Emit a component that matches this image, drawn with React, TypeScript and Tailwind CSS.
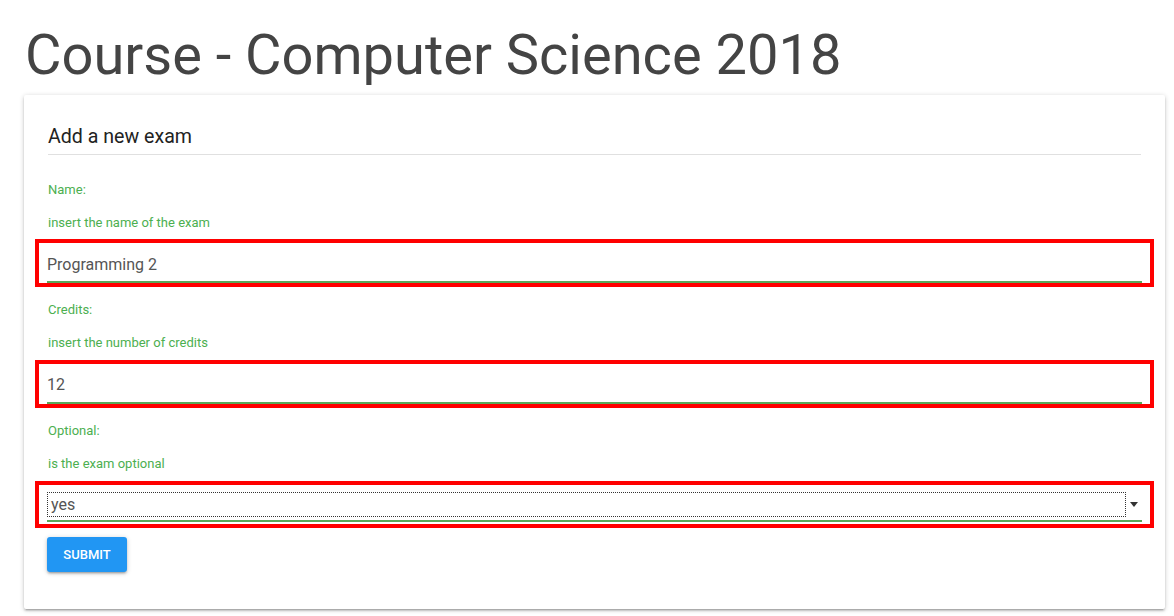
import React from 'react';

const green = 'text-[#4caf50]';

const Field: React.FC<{ label: string; hint: string; children: React.ReactNode; first?: boolean }> = ({ label, hint, children, first }) => (
    <div className={first ? 'mt-[25px]' : 'mt-[13px]'}>
        <div className={`text-[13px] leading-[20px] ${green}`}>{label}</div>
        <div className={`mt-[13px] text-[13px] leading-[20px] ${green}`}>{hint}</div>
        <div className={`${first ? 'mt-[6px]' : 'mt-[7px]'} -mx-[13px] border-4 border-[#ff0000] px-[8px]`}>{children}</div>
    </div>
);

const App: React.FC = () => {
    return (
        <div className="min-h-screen bg-white font-['Roboto',sans-serif]">
            <div className="pl-[24px] pr-[9px]">
                <h1 className="pl-[1px] pt-[23px] text-[56px] leading-[65px] font-normal text-[#444444]">
                    Course - Computer Science 2018
                </h1>
                <div className="mt-[7px] bg-white rounded-[2px] px-[24px] pb-[37px] shadow-[0_2px_2px_0_rgba(0,0,0,0.14),0_3px_1px_-2px_rgba(0,0,0,0.12),0_1px_5px_0_rgba(0,0,0,0.2)]">
                    <h2 className="pt-[28px] pb-[3px] border-b border-[#e0e0e0] text-[19.6px] leading-[28px] font-normal text-[#222222]">
                        Add a new exam
                    </h2>

                    <Field first label="Name:" hint="insert the name of the exam">
                        <input
                            readOnly
                            value="Programming 2"
                            className="block w-full h-[40px] pt-[4px] border-b-2 border-[#5aa85a] bg-transparent text-[16px] text-[#555555] outline-none"
                        />
                    </Field>

                    <Field label="Credits:" hint="insert the number of credits">
                        <input
                            readOnly
                            value="12"
                            className="block w-full h-[40px] pt-[3px] border-b-2 border-[#5aa85a] bg-transparent text-[16px] text-[#555555] outline-none"
                        />
                    </Field>

                    <Field label="Optional:" hint="is the exam optional">
                        <div className="pt-[7px] pb-[2px]">
                            <div className="flex items-center border-b-2 border-[#5aa85a] pb-[3px]">
                                <div className="flex-1 h-[25px] border border-dotted border-[#333333] pl-[3px] text-[16px] leading-[23px] text-[#555555]">
                                    yes
                                </div>
                                <div className="w-[16px] flex justify-center">
                                    <svg width="8" height="5" viewBox="0 0 8 5">
                                        <path d="M0 0 H8 L4 5 Z" fill="#333333" />
                                    </svg>
                                </div>
                            </div>
                        </div>
                    </Field>

                    <button className="mt-[9px] -ml-[1px] h-[35px] w-[80px] rounded-[3px] bg-[#2196f3] text-white text-[13px] font-medium uppercase shadow-[0_2px_2px_0_rgba(0,0,0,0.14),0_3px_1px_-2px_rgba(0,0,0,0.12),0_1px_5px_0_rgba(0,0,0,0.2)]">
                        Submit
                    </button>
                </div>
            </div>
        </div>
    );
};

export default App;
